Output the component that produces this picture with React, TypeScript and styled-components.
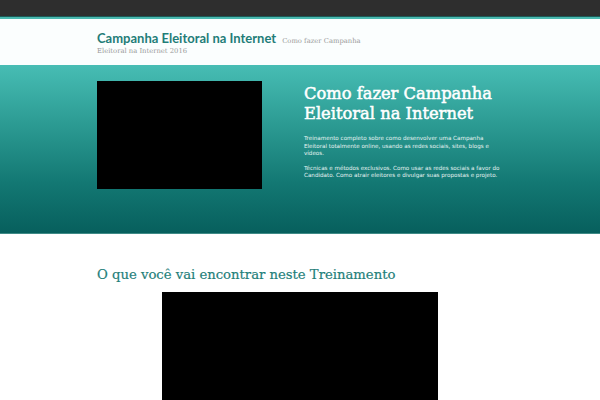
import React from 'react'
import styled, { createGlobalStyle } from 'styled-components'

const GlobalStyle = createGlobalStyle`
  html, body {
    margin: 0;
    padding: 0;
    background: #ffffff;
    font-family: "DejaVu Sans", sans-serif;
  }
`

const TopBar = styled.div`
  height: 16px;
  background: #2e2e2e;
  border-bottom: 1px solid #1d5a57;
  box-shadow: 0 2px 0 #4ab9b0;
  position: relative;
  z-index: 1;
`

const Header = styled.header`
  height: 46px;
  margin-top: 2px;
  background: #fbfefe;
  display: flex;
  align-items: center;
`

const Container = styled.div`
  width: 406px;
  margin: 0 auto;
`

const Branding = styled.div`
  padding-top: 2px;
`

const BrandRow = styled.div`
  display: flex;
  align-items: baseline;
  gap: 6px;
`

const SiteTitle = styled.span`
  font-family: Lato, "Liberation Sans", sans-serif;
  font-weight: 700;
  font-size: 13px;
  line-height: 16px;
  color: #1f7d78;
`

const Tagline = styled.span<{ $top?: number }>`
  display: block;
  font-family: "DejaVu Serif", serif;
  font-size: 6.8px;
  line-height: 9px;
  color: #9a9a9a;
  margin-top: ${({ $top }) => $top ?? 0}px;
`

const Hero = styled.section`
  height: 169px;
  background: linear-gradient(to bottom, #47bdb4 0%, #2c9b93 35%, #137873 70%, #075f5d 100%);
  border-bottom: 1px solid #3f8a86;
  display: flex;
  padding-top: 16px;
  box-sizing: border-box;
`

const HeroInner = styled(Container)`
  display: flex;
  gap: 42px;
  align-items: flex-start;
`

const Video = styled.div<{ w: number; h: number }>`
  width: ${({ w }) => w}px;
  height: ${({ h }) => h}px;
  background: #000000;
  flex-shrink: 0;
`

const HeroText = styled.div`
  flex: 1;
  color: #ffffff;
  padding-top: 3px;
`

const HeroTitle = styled.h1`
  font-family: "DejaVu Serif", serif;
  font-weight: 400;
  font-size: 16.3px;
  line-height: 20px;
  margin: 0 0 11px;
  color: #ffffff;
  -webkit-text-stroke: 0.5px #ffffff;
`

const HeroParagraph = styled.p`
  font-size: 5.6px;
  line-height: 7.6px;
  margin: 0 0 7px;
  color: #e6f4f2;
`

const Section = styled.section`
  padding-top: 33px;
`

const SectionTitle = styled.h2`
  font-family: "DejaVu Serif", serif;
  font-weight: 400;
  font-size: 13.2px;
  line-height: 16px;
  color: #1f807a;
  margin: 0 0 9px;
  -webkit-text-stroke: 0.2px #1f807a;
`

const Center = styled.div`
  display: flex;
  justify-content: center;
`

export default function App() {
  return (
    <>
      <GlobalStyle />
      <TopBar />
      <Header>
        <Container>
          <Branding>
            <BrandRow>
              <SiteTitle>Campanha Eleitoral na Internet</SiteTitle>
              <Tagline>Como fazer Campanha</Tagline>
            </BrandRow>
            <Tagline $top={1}>Eleitoral na Internet 2016</Tagline>
          </Branding>
        </Container>
      </Header>
      <Hero>
        <HeroInner>
          <Video w={165} h={108} />
          <HeroText>
            <HeroTitle>Como fazer Campanha Eleitoral na Internet</HeroTitle>
            <HeroParagraph>
              Treinamento completo sobre como desenvolver uma Campanha Eleitoral totalmente online, usando as redes sociais, sites, blogs e vídeos.
            </HeroParagraph>
            <HeroParagraph>
              Técnicas e métodos exclusivos. Como usar as redes sociais a favor do Candidato. Como atrair eleitores e divulgar suas propostas e projeto.
            </HeroParagraph>
          </HeroText>
        </HeroInner>
      </Hero>
      <Section>
        <Container>
          <SectionTitle>O que você vai encontrar neste Treinamento</SectionTitle>
          <Center>
            <Video w={276} h={120} />
          </Center>
        </Container>
      </Section>
    </>
  )
}
